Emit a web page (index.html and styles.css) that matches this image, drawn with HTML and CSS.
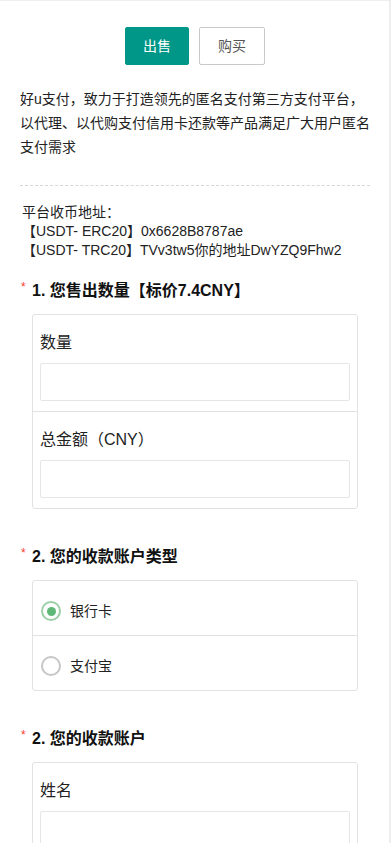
FILE: index.html
```html
<!DOCTYPE html>
<html lang="zh-CN">
<head>
<meta charset="utf-8">
<meta name="viewport" content="width=device-width, initial-scale=1">
<title>好u支付</title>
<link rel="stylesheet" href="styles.css">
</head>
<body>
<div class="page">
  <div class="tabs">
    <button class="btn btn-primary" type="button">出售</button>
    <button class="btn btn-outline" type="button">购买</button>
  </div>

  <p class="intro">好u支付，致力于打造领先的匿名支付第三方支付平台，以代理、以代购支付信用卡还款等产品满足广大用户匿名支付需求</p>

  <div class="divider"></div>

  <div class="address">
    <div>平台收币地址：</div>
    <div>【USDT- ERC20】0x6628B8787ae</div>
    <div>【USDT- TRC20】TVv3tw5你的地址DwYZQ9Fhw2</div>
  </div>

  <section class="question first">
    <h3 class="q-title"><span class="req">*</span><span>1. 您售出数量【标价7.4CNY】</span></h3>
    <div class="card">
      <div class="field">
        <label class="field-label">数量</label>
        <input class="input" type="text">
      </div>
      <div class="field">
        <label class="field-label">总金额（CNY）</label>
        <input class="input" type="text">
      </div>
    </div>
  </section>

  <section class="question">
    <h3 class="q-title"><span class="req">*</span><span>2. 您的收款账户类型</span></h3>
    <div class="card">
      <div class="option">
        <span class="radio checked"></span>
        <span class="option-text">银行卡</span>
      </div>
      <div class="option">
        <span class="radio"></span>
        <span class="option-text">支付宝</span>
      </div>
    </div>
  </section>

  <section class="question">
    <h3 class="q-title"><span class="req">*</span><span>2. 您的收款账户</span></h3>
    <div class="card">
      <div class="field">
        <label class="field-label">姓名</label>
        <input class="input" type="text">
      </div>
    </div>
  </section>
</div>
</body>
</html>
```

FILE: styles.css
```css
html, body {
  margin: 0;
  padding: 0;
}

body {
  background: #eeeeee;
  font-family: "Liberation Sans", "Noto Sans CJK SC", sans-serif;
  color: #333;
}

.page {
  box-sizing: border-box;
  width: 389px;
  margin-top: 1px;
  background: #fff;
  padding: 26px 19px 40px 20px;
}

.tabs {
  display: flex;
  justify-content: center;
  gap: 10px;
}

.btn {
  box-sizing: border-box;
  height: 38px;
  width: 64px;
  padding: 0;
  border-radius: 2px;
  font-family: "Liberation Sans", "Noto Sans CJK SC", sans-serif;
  font-size: 14px;
  line-height: 36px;
  cursor: pointer;
}

.btn-primary {
  background: #009688;
  color: #fff;
  border: 1px solid #009688;
}

.btn-outline {
  width: 66px;
  background: #fff;
  color: #555;
  border: 1px solid #c9c9c9;
}

.intro {
  margin: 22px 0 0;
  font-size: 14px;
  line-height: 24px;
  color: #222;
}

.divider {
  margin-top: 26px;
  border-top: 1px dashed #d6d6d6;
}

.address {
  margin-top: 17px;
  padding-left: 2px;
  font-size: 14px;
  line-height: 19px;
  color: #222;
}

.question {
  margin-top: 36px;
}

.question.first {
  margin-top: 19px;
}

.q-title {
  display: flex;
  margin: 0;
  font-size: 16px;
  line-height: 24px;
  font-weight: bold;
  color: #111;
}

.req {
  width: 11px;
  padding-left: 1px;
  align-self: flex-start;
  font-size: 12px;
  line-height: 16px;
  font-weight: normal;
  color: #ff3b30;
}

.card {
  margin: 11px 12px 0;
  border: 1px solid #e2e2e2;
  border-radius: 3px;
}

.field {
  padding: 18px 7px 10px;
}

.field + .field,
.option + .option {
  border-top: 1px solid #e2e2e2;
}

.field-label {
  display: block;
  font-size: 16px;
  line-height: 20px;
  margin-bottom: 10px;
  color: #222;
}

.input {
  display: block;
  box-sizing: border-box;
  width: 100%;
  height: 38px;
  border: 1px solid #e6e6e6;
  border-radius: 2px;
  background: #fff;
  padding: 0 10px;
  font-size: 14px;
}

.option {
  display: flex;
  align-items: center;
  gap: 9px;
  padding: 20px 7px 14px 8px;
}

.radio {
  box-sizing: border-box;
  width: 20px;
  height: 20px;
  border-radius: 50%;
  border: 2px solid #c6c6c6;
  display: flex;
  align-items: center;
  justify-content: center;
}

.radio.checked {
  border-color: #9ccfa8;
}

.radio.checked::after {
  content: "";
  width: 9px;
  height: 9px;
  border-radius: 50%;
  background: #5fb878;
}

.option-text {
  font-size: 14px;
  line-height: 20px;
  color: #222;
}
```
